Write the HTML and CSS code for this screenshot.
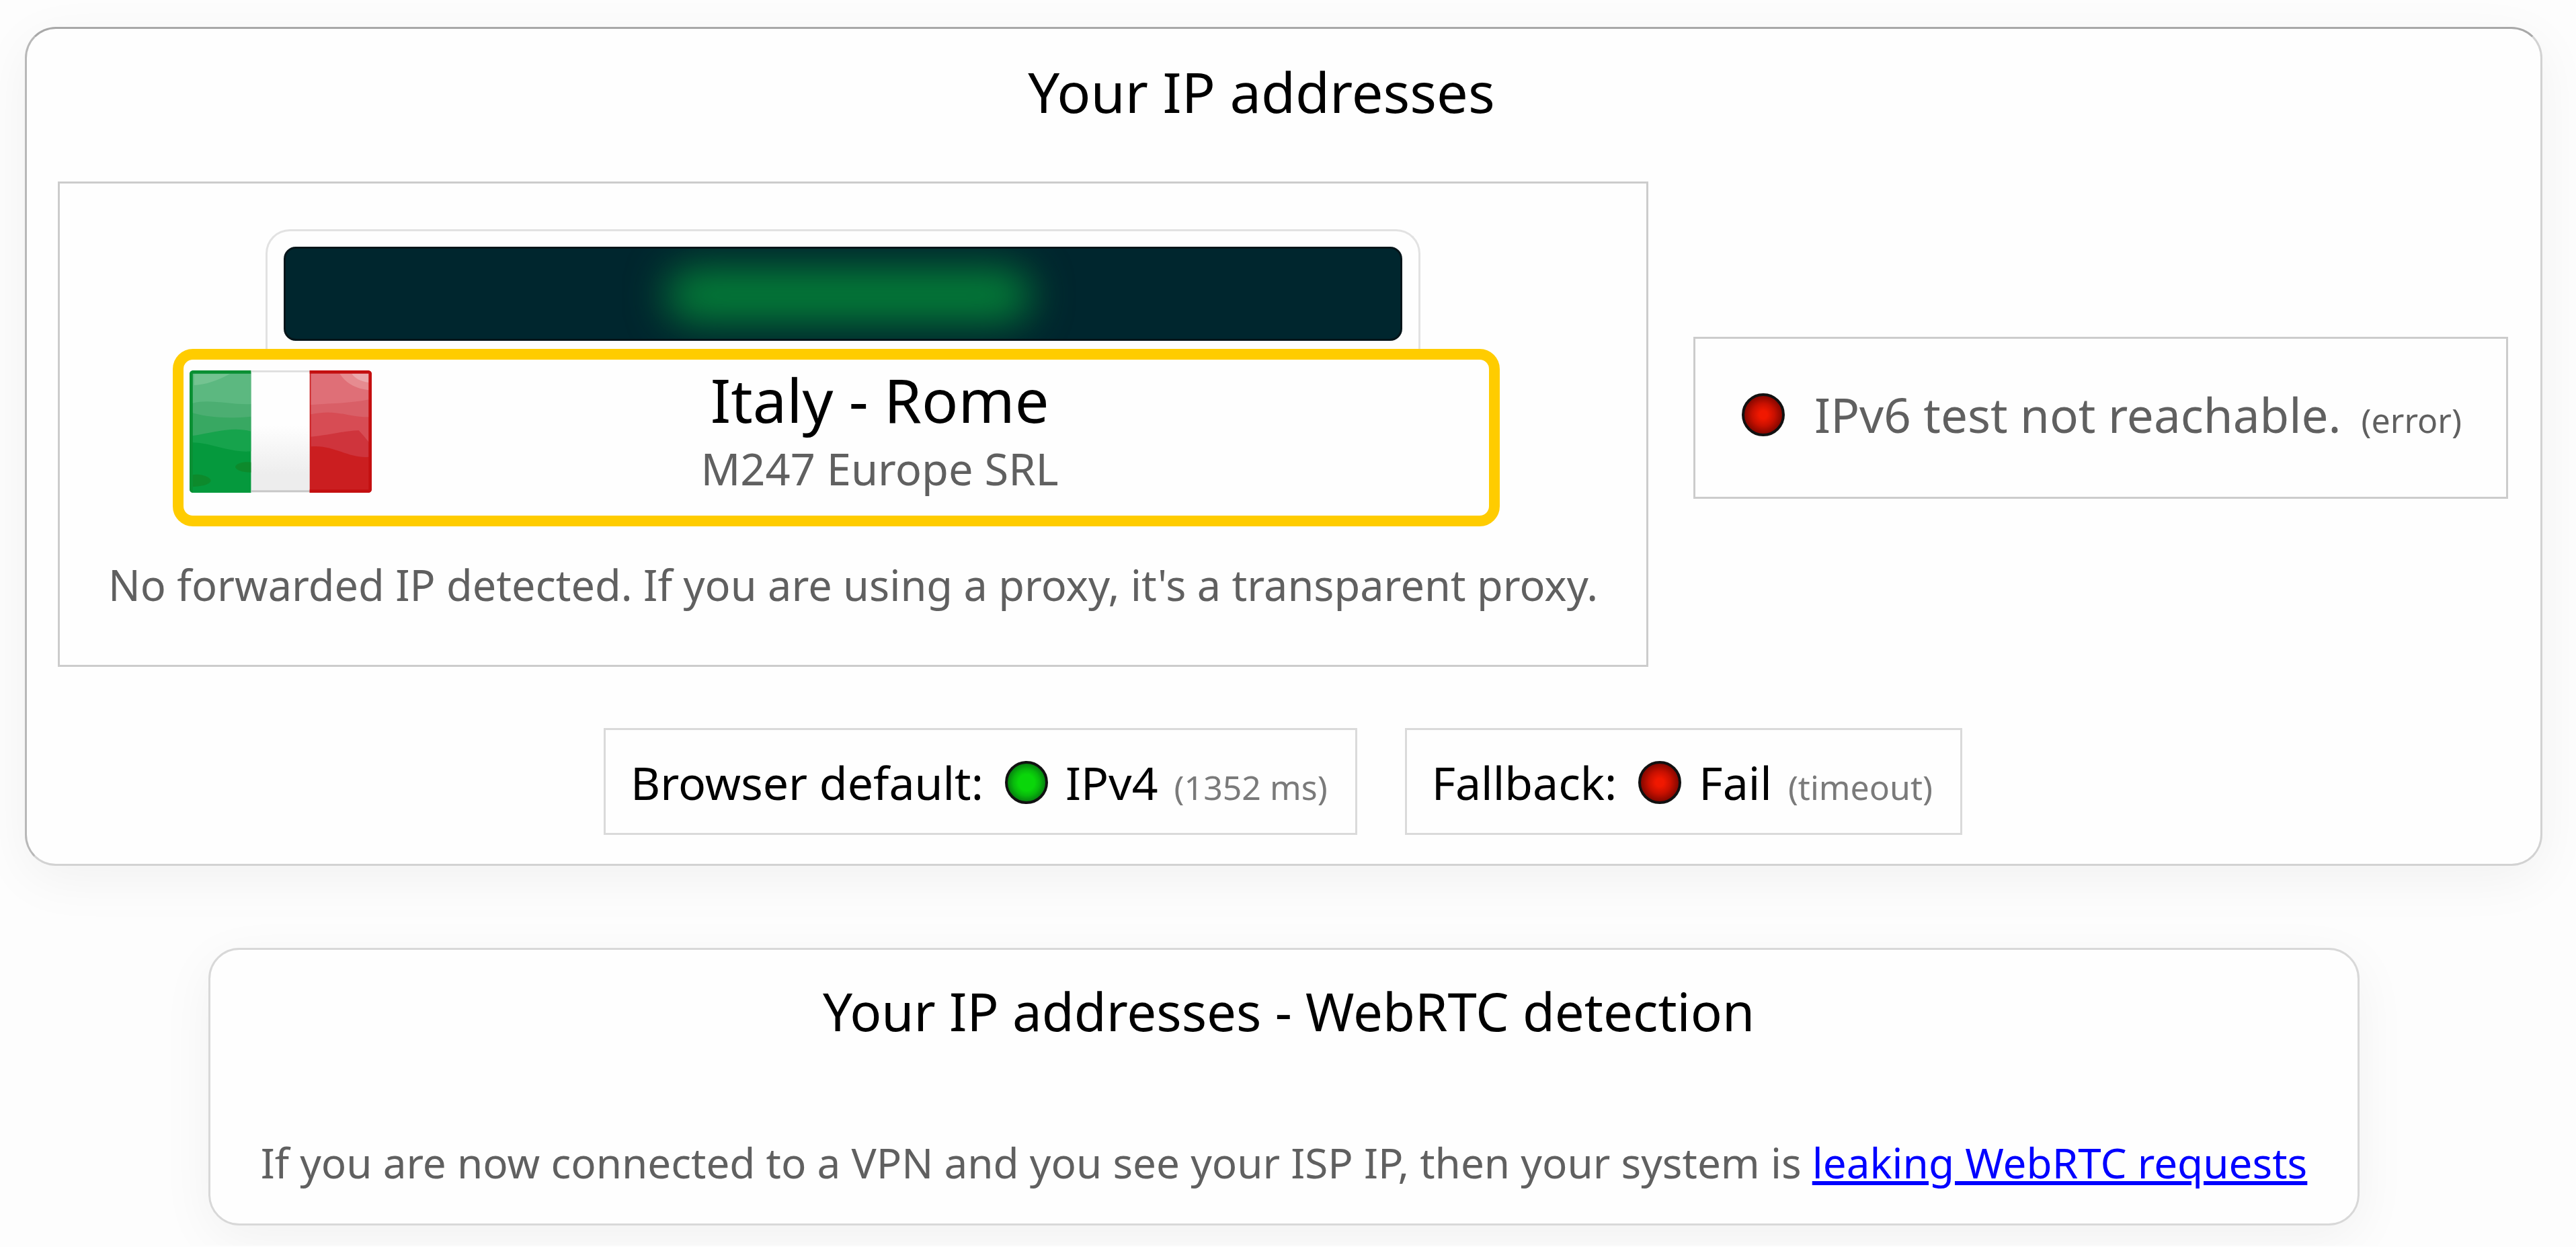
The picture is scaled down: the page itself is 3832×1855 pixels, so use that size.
FILE: index.html
```html
<!DOCTYPE html>
<html lang="en">
<head>
    <meta charset="UTF-8">
    <meta name="viewport" content="width=device-width, initial-scale=1.0">
    <title>Your IP addresses</title>
    <link rel="stylesheet" href="styles.css">
</head>
<body>
    <section class="panel panel-ip">
        <h1>Your IP addresses</h1>

        <div class="tests">
            <div class="box box-ipv4">
                <div class="ip">
                    <div class="ip-value"><div class="glow"></div></div>
                </div>
                <div class="location">
                    <svg class="flag" viewBox="0 0 813 546" role="img" aria-label="Italy">
                        <defs>
                            <linearGradient id="white" x1="0" y1="0" x2="0" y2="1">
                                <stop offset="0.45" stop-color="#fefefe"/>
                                <stop offset="0.85" stop-color="#ededed"/>
                            </linearGradient>
                            <clipPath id="corners"><rect width="813" height="546" rx="16"/></clipPath>
                        </defs>
                        <g clip-path="url(#corners)">
                            <!-- green -->
                            <rect width="275" height="546" fill="#05993d"/>
                            <path d="M14 14H275V361C190 370 90 322 14 322Z" fill="#16a34c"/>
                            <path d="M14 14H275V272C190 250 120 274 14 292Z" fill="#38a862"/>
                            <path d="M14 14H275V206C180 214 100 214 14 190Z" fill="#4cae72"/>
                            <path d="M14 14H275V150C190 155 90 125 14 146Z" fill="#5cb880"/>
                            <path d="M20 16H180C120 48 70 64 20 66Z" fill="#74c391"/>
                            <path d="M14 466C45 458 95 475 95 492C90 512 50 516 14 520Z" fill="#0d8a2c"/>
                            <path d="M275 410C235 404 204 418 204 432C208 446 240 456 275 455Z" fill="#0d8a2c"/>
                            <path d="M7 546V7H275" fill="none" stroke="#0a8f33" stroke-width="14"/>
                            <!-- white -->
                            <rect x="275" width="261" height="546" fill="url(#white)"/>
                            <path d="M275 4H536" stroke="#dedede" stroke-width="8"/>
                            <path d="M275 539H536" stroke="#c8c8c8" stroke-width="8"/>
                            <!-- red -->
                            <rect x="536" width="277" height="546" fill="#cb1e20"/>
                            <path d="M542 12H800V386C710 394 640 330 542 340Z" fill="#cf343c"/>
                            <path d="M542 12H800V320Q776 290 755 268C680 270 620 290 542 296Z" fill="#d74c54"/>
                            <path d="M542 12H800V208C700 210 660 170 542 196Z" fill="#d95f67"/>
                            <path d="M542 12H800V130C710 148 640 146 542 154Z" fill="#df6f77"/>
                            <path d="M670 14H800V88C740 80 700 60 670 14Z" fill="#e68b90"/>
                            <path d="M724 14H800V54C760 48 736 34 724 14Z" fill="#eba9ad"/>
                            <path d="M536 7H806V539H536" fill="none" stroke="#c40f10" stroke-width="14"/>
                        </g>
                    </svg>
                    <div class="place">
                        <div class="city">Italy - Rome</div>
                        <div class="provider">M247 Europe SRL</div>
                    </div>
                </div>
                <p class="forwarded">No forwarded IP detected. If you are using a proxy, it's a transparent proxy.</p>
            </div>

            <div class="box box-ipv6">
                <span class="dot red"></span>
                <span class="unreachable">IPv6 test not reachable.</span>
                <small>(error)</small>
            </div>
        </div>

        <div class="results">
            <div class="result">
                <span>Browser default:</span>
                <span class="dot green"></span>
                <span class="value">IPv4</span>
                <small>(1352 ms)</small>
            </div>
            <div class="result">
                <span>Fallback:</span>
                <span class="dot red"></span>
                <span class="value">Fail</span>
                <small>(timeout)</small>
            </div>
        </div>
    </section>

    <section class="panel panel-webrtc">
        <h2>Your IP addresses - WebRTC detection</h2>
        <p>If you are now connected to a VPN and you see your ISP IP, then your system is <a href="#">leaking WebRTC requests</a></p>
    </section>
</body>
</html>
```
FILE: styles.css
```css
* {
    box-sizing: border-box;
}
body {
    margin: 0;
    padding: 40px 50px 30px 37px;
    background-color: #fdfdfd;
    color: #000;
    font-family: 'Noto Sans', sans-serif;
    font-size: 62px;
    text-align: center;
    white-space: nowrap;
}
h1, h2, p {
    margin: 0;
    font-weight: normal;
}
.panel {
    background-color: #fefefe;
    border: 3px solid #d2d2d2;
    border-radius: 46px;
    box-shadow: 0 20px 80px rgba(0,0,0,0.05);
}
.panel-ip {
    padding: 0 48px 43px 46px;
    border-top-color: #a8a8a8;
    border-left-color: #b8b8b8;
}
h1 {
    padding: 33px 64px 0 0;
    height: 227px;
    font-size: 83px;
    line-height: 120px;
}

/* IPv4 / IPv6 tests */
.tests {
    display: flex;
    align-items: center;
    gap: 67px;
}
.box {
    border: 3px solid #cccccc;
    color: #606060;
}
.box-ipv4 {
    flex: 1;
    padding: 68px 0 74px;
}
.ip {
    margin: 0 336px 0 306px;
    padding: 23px 24px 12px;
    border: 3px solid #e2e2e2;
    border-bottom: none;
    border-radius: 36px 36px 0 0;
}
.ip-value {
    height: 140px;
    padding: 30px 33% 26px 34%;
    background-color: #00262e;
    border: 3px solid #06151a;
    border-radius: 18px;
    overflow: hidden;
}
.glow {
    height: 100%;
    background-color: #048038;
    border-radius: 40px;
    filter: blur(30px);
}
.location {
    display: flex;
    align-items: flex-start;
    margin: 0 218px 0 168px;
    padding: 0 151px 0 9px;
    height: 264px;
    border: 16px solid #ffcc00;
    border-radius: 30px;
}
.flag {
    width: 271px;
    height: 182px;
    margin-top: 16px;
}
.place {
    flex: 1;
}
.city {
    color: #000;
    font-size: 90px;
    line-height: 118px;
}
.provider {
    font-size: 65px;
    line-height: 88px;
}
.forwarded {
    margin-top: 42px;
    font-size: 63px;
    line-height: 90px;
}
.box-ipv6 {
    display: flex;
    align-items: baseline;
    margin-bottom: 20px;
    padding: 63px 66px 72px 69px;
    font-size: 71px;
    line-height: 100px;
}
small {
    font-size: 50px;
    line-height: 1;
}
.box-ipv6 small {
    margin-left: 30px;
}
.unreachable {
    margin-left: 44px;
}

/* status lights */
.dot {
    align-self: center;
    width: 64px;
    height: 64px;
    border: 4px solid #111;
    border-radius: 50%;
}
.red {
    background: radial-gradient(circle, #f01800 15%, #c81000 42%, #8c0800 68%);
}
.green {
    background: radial-gradient(circle, #0ad60a 30%, #08b80c 50%, #078a10 68%);
}

/* results */
.results {
    display: flex;
    justify-content: center;
    gap: 71px;
    margin-top: 91px;
}
.result {
    display: flex;
    align-items: baseline;
    padding: 30px 41px 27px 37px;
    border: 3px solid #dadada;
    font-size: 68px;
    line-height: 96px;
}
.result .dot {
    margin: 0 26px 0 32px;
}
.result small {
    margin-left: 24px;
    color: #7a7a7a;
}

/* WebRTC */
.panel-webrtc {
    margin: 122px 272px 0 273px;
    padding: 35px 64px 38px;
    border-color: #d8d8d8;
}
h2 {
    padding-left: 14px;
    font-size: 78px;
    line-height: 112px;
}
.panel-webrtc p {
    margin-top: 116px;
    color: #606060;
    line-height: 106px;
}
a {
    color: #0000ff;
}
```
